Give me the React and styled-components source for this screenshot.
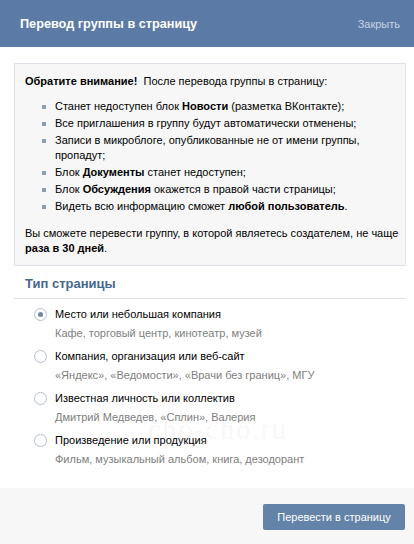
import React from "react";
import styled, { createGlobalStyle } from "styled-components";

const Global = createGlobalStyle`
  html, body {
    margin: 0;
    padding: 0;
    background: #ffffff;
  }
  body {
    font-family: "Liberation Sans", Arial, sans-serif;
    font-size: 11px;
    color: #000;
  }
`;

const Box = styled.div`
  position: relative;
  width: 414px;
  height: 544px;
  display: flex;
  flex-direction: column;
  background: #fff;
  overflow: hidden;
`;

const Header = styled.div`
  height: 47px;
  background: #5b7ba6;
  display: flex;
  align-items: center;
  justify-content: space-between;
  padding: 0 14px 0 20px;
  flex-shrink: 0;
`;

const HeaderTitle = styled.div`
  color: #fff;
  font-weight: bold;
  font-size: 12.7px;
`;

const Close = styled.div`
  color: #c7d4e5;
  font-size: 11px;
`;

const Body = styled.div`
  flex: 1;
  padding: 16px 8px 0 14px;
`;

const Notice = styled.div`
  width: 392px;
  box-sizing: border-box;
  background: #f7f7f7;
  border: 1px solid #dde2e9;
  padding: 10px 4px 9px 10px;
  line-height: 15px;
`;

const List = styled.ul`
  list-style: none;
  margin: 10px 0 12px 0;
  padding: 0 0 0 30px;
`;

const Item = styled.li`
  position: relative;
  margin-bottom: 2px;
  &::before {
    content: "";
    position: absolute;
    left: -13px;
    top: 6px;
    width: 4px;
    height: 4px;
    background: #8b9db3;
  }
`;

const SectionTitle = styled.div`
  color: #45688e;
  font-weight: bold;
  font-size: 13px;
  padding: 10px 0 7px 11px;
  border-bottom: 1px solid #dae1e8;
  width: 392px;
  box-sizing: border-box;
`;

const Options = styled.div`
  display: flex;
  flex-direction: column;
  gap: 8px;
  padding: 8px 0 0 20px;
`;

const Option = styled.div`
  display: grid;
  grid-template-columns: 21px 1fr;
  row-gap: 4px;
  align-items: center;
`;

const Radio = styled.span`
  width: 11px;
  height: 11px;
  border-radius: 50%;
  border: 1px solid #b5bfcb;
  background: #fff;
  display: flex;
  align-items: center;
  justify-content: center;
  &::after {
    content: "";
    width: 5px;
    height: 5px;
    border-radius: 50%;
    background: ${(p) => (p.$checked ? "#6d87a8" : "transparent")};
  }
`;

const Label = styled.div`
  line-height: 15px;
`;

const Hint = styled.div`
  grid-column: 2;
  color: #7e7e7e;
  line-height: 15px;
`;

const Footer = styled.div`
  height: 56px;
  background: #f7f7f7;
  display: flex;
  align-items: center;
  justify-content: flex-end;
  padding: 0 9px 0 0;
  flex-shrink: 0;
`;

const Button = styled.div`
  background: #6383a8;
  color: #fff;
  border-radius: 2px;
  width: 142px;
  height: 26px;
  display: flex;
  align-items: center;
  justify-content: center;
  font-size: 11px;
  margin-top: 2px;
`;

const Watermark = styled.div`
  position: absolute;
  left: 148px;
  top: 413px;
  font-family: "Liberation Serif", "Times New Roman", serif;
  font-size: 29px;
  letter-spacing: 1.5px;
  color: rgba(0, 0, 0, 0.055);
  pointer-events: none;
`;

const options = [
  { label: "Место или небольшая компания", hint: "Кафе, торговый центр, кинотеатр, музей", checked: true },
  { label: "Компания, организация или веб-сайт", hint: "«Яндекс», «Ведомости», «Врачи без границ», МГУ" },
  { label: "Известная личность или коллектив", hint: "Дмитрий Медведев, «Сплин», Валерия" },
  { label: "Произведение или продукция", hint: "Фильм, музыкальный альбом, книга, дезодорант" },
];

export default function App() {
  return (
    <Box>
      <Global />
      <Header>
        <HeaderTitle>Перевод группы в страницу</HeaderTitle>
        <Close>Закрыть</Close>
      </Header>
      <Body>
        <Notice>
          <div>
            <b>Обратите внимание!</b>&nbsp; После перевода группы в страницу:
          </div>
          <List>
            <Item>
              Станет недоступен блок <b>Новости</b> (разметка ВКонтакте);
            </Item>
            <Item>Все приглашения в группу будут автоматически отменены;</Item>
            <Item>
              Записи в микроблоге, опубликованные не от имени группы, пропадут;
            </Item>
            <Item>
              Блок <b>Документы</b> станет недоступен;
            </Item>
            <Item>
              Блок <b>Обсуждения</b> окажется в правой части страницы;
            </Item>
            <Item>
              Видеть всю информацию сможет <b>любой пользователь</b>.
            </Item>
          </List>
          <div>
            Вы сможете перевести группу, в которой являетесь создателем, не
            чаще <b>раза в 30 дней</b>.
          </div>
        </Notice>
        <SectionTitle>Тип страницы</SectionTitle>
        <Options>
          {options.map((o) => (
            <Option key={o.label}>
              <Radio $checked={o.checked} />
              <Label>{o.label}</Label>
              <Hint>{o.hint}</Hint>
            </Option>
          ))}
        </Options>
      </Body>
      <Footer>
        <Button>Перевести в страницу</Button>
      </Footer>
      <Watermark>cho-cho.ru</Watermark>
    </Box>
  );
}
